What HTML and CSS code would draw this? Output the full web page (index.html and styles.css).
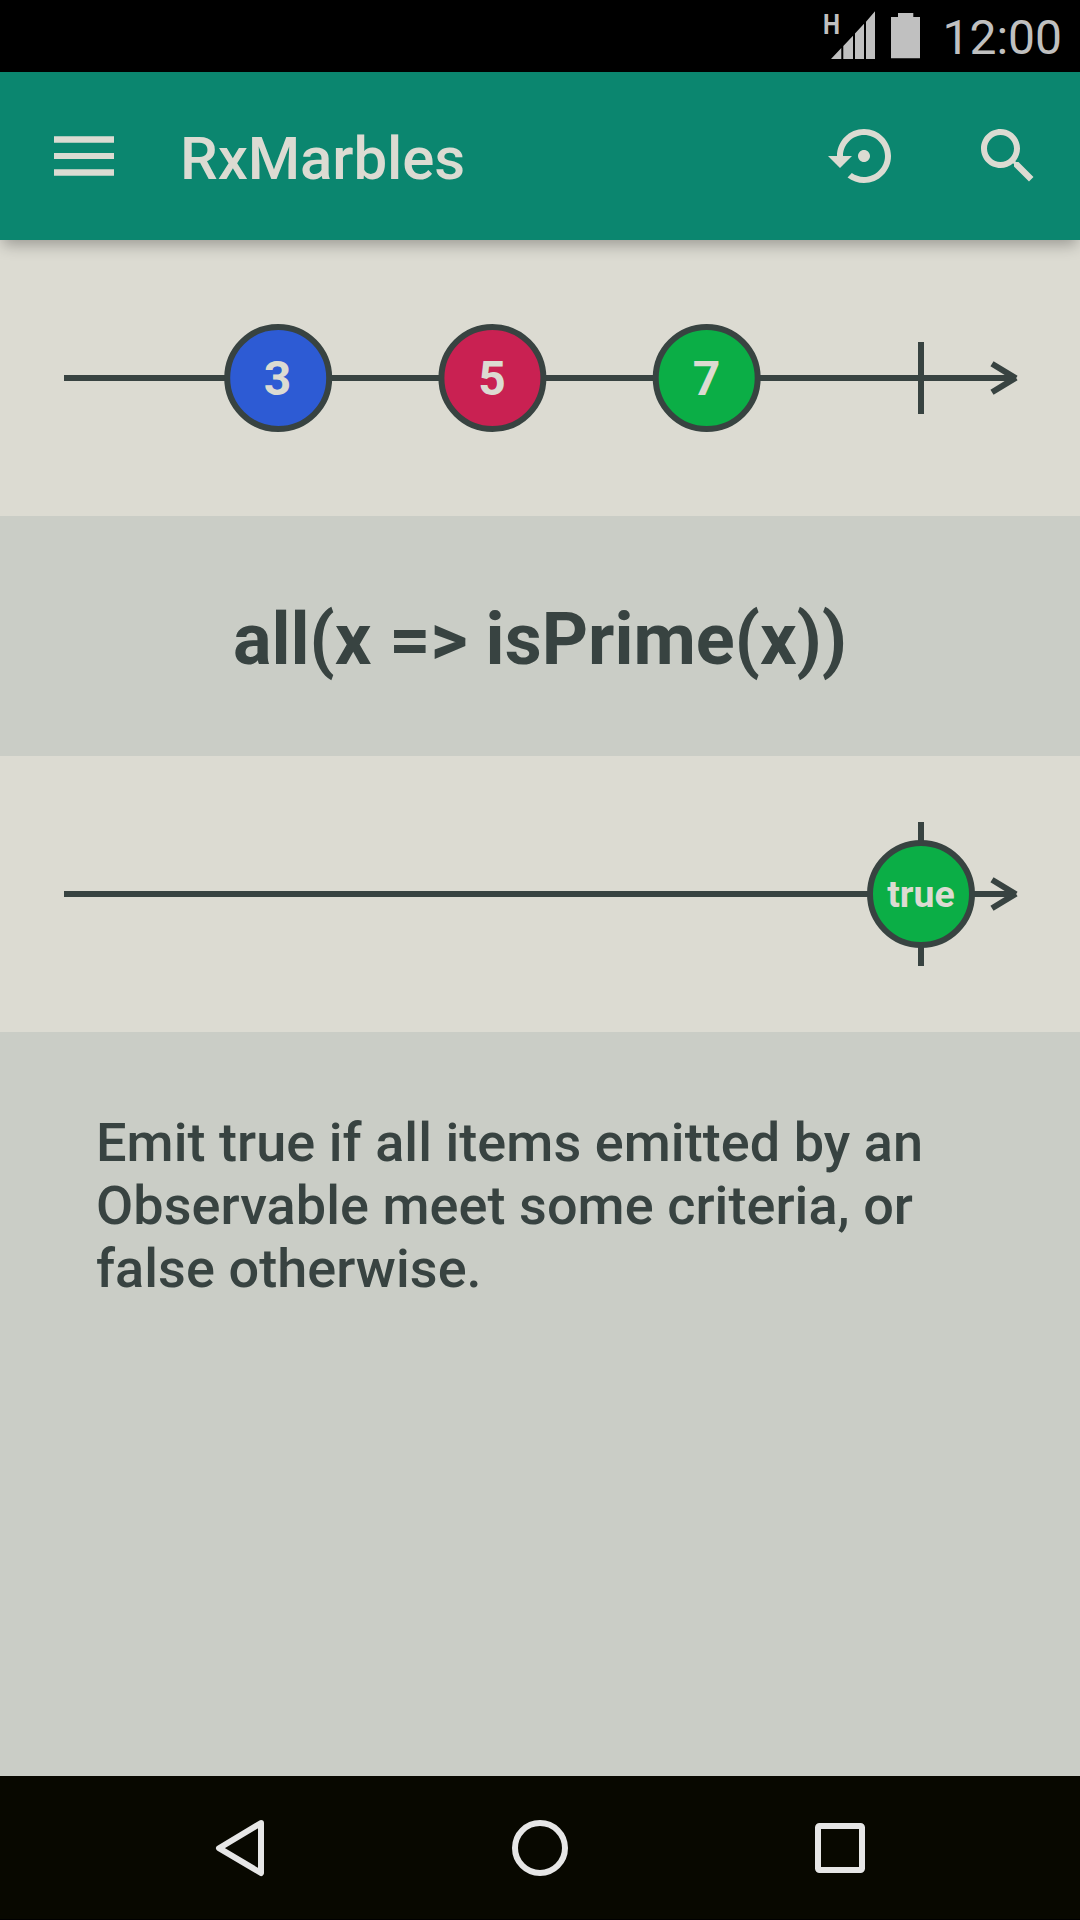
FILE: index.html
```html
<!DOCTYPE html>
<html lang="en">
<head>
<meta charset="utf-8">
<title>RxMarbles</title>
<link rel="stylesheet" href="styles.css">
</head>
<body>
<div class="screen">
  <div class="status-bar">
    <svg class="status-icons" width="100" height="72" viewBox="0 0 100 72" aria-hidden="true">
      <text class="network" x="3" y="33.7" textLength="17" lengthAdjust="spacingAndGlyphs">H</text>
      <path d="M11 59 21.3 48V59ZM23.3 59V46L33 35.7V59ZM35 59V33.5L44 23.8V59ZM46 59V21.7L55 11.2V59Z"/>
      <path d="M78 13H93.3V17H100V58.2H71V17H78Z"/>
    </svg>
    <span class="clock">12:00</span>
  </div>
  <header class="toolbar">
    <svg width="60" height="72" viewBox="0 0 60 72" aria-label="Menu">
      <path d="M0 16.2H60V22.7H0ZM0 33H60V39H0ZM0 49.2H60V55.7H0Z"/>
    </svg>
    <h1 class="title">RxMarbles</h1>
    <div class="actions">
      <svg width="72" height="72" viewBox="0 0 24 24" aria-label="Restore">
        <path d="M14 12c0-1.1-.9-2-2-2s-2 .9-2 2 .9 2 2 2 2-.9 2-2zm-2-9c-4.97 0-9 4.03-9 9H0l4 4 4-4H5c0-3.87 3.13-7 7-7s7 3.13 7 7-3.13 7-7 7c-1.51 0-2.91-.49-4.06-1.3l-1.42 1.44C8.04 20.3 9.94 21 12 21c4.97 0 9-4.03 9-9s-4.03-9-9-9z"/>
      </svg>
      <svg width="72" height="72" viewBox="0 0 24 24" aria-label="Search">
        <path d="M15.5 14h-.79l-.28-.27C15.41 12.59 16 11.11 16 9.5 16 5.91 13.09 3 9.5 3S3 5.91 3 9.5 5.91 16 9.5 16c1.61 0 3.09-.59 4.23-1.57l.27.28v.79l5 4.99L20.49 19l-4.99-5zm-6 0C7.01 14 5 11.99 5 9.5S7.01 5 9.5 5 14 7.01 14 9.5 11.99 14 9.5 14z"/>
      </svg>
    </div>
  </header>
  <main class="content">
    <svg class="timeline" width="1080" height="276" viewBox="0 0 1080 276">
      <path class="axis" d="M64 138H1016M992 123.8 1016 138.4M992 152.2 1016 137.6M921 102V174"/>
      <circle class="marble blue" cx="278.2" cy="138" r="51"/>
      <circle class="marble red" cx="492.4" cy="138" r="51"/>
      <circle class="marble green" cx="706.7" cy="138" r="51"/>
      <text class="value" x="277.5" y="155">3</text>
      <text class="value" x="492" y="155">5</text>
      <text class="value" x="706.5" y="155">7</text>
    </svg>
    <h2 class="operator">all(x =&gt; isPrime(x))</h2>
    <svg class="timeline" width="1080" height="276" viewBox="0 0 1080 276">
      <path class="axis" d="M64 138H1016M992 123.8 1016 138.4M992 152.2 1016 137.6M921 66V210"/>
      <circle class="marble green" cx="921" cy="138" r="51"/>
      <text class="value small" x="921" y="151.3">true</text>
    </svg>
    <p class="description">Emit true if all items emitted by an Observable meet some criteria, or false otherwise.</p>
  </main>
  <nav class="nav-bar">
    <svg width="60" height="60" viewBox="0 0 60 60" aria-label="Back">
      <path d="M51 5 9 30.2 51 55Z"/>
    </svg>
    <svg width="60" height="60" viewBox="0 0 60 60" aria-label="Home">
      <circle cx="30" cy="30" r="25"/>
    </svg>
    <svg width="60" height="60" viewBox="0 0 60 60" aria-label="Overview">
      <rect x="8" y="8" width="44" height="44" rx="1.5"/>
    </svg>
  </nav>
</div>
</body>
</html>
```
FILE: styles.css
```css
* {
  box-sizing: border-box;
}

body {
  margin: 0;
  font-family: Roboto, "Liberation Sans", sans-serif;
}

svg {
  display: block;
  flex: none;
}

h1,
h2,
p {
  margin: 0;
}

.screen {
  display: flex;
  flex-direction: column;
  width: 1080px;
  height: 1920px;
  overflow: hidden;
  background: #cacdc6;
}

.status-bar {
  display: flex;
  flex: none;
  justify-content: flex-end;
  align-items: center;
  gap: 22px;
  height: 72px;
  padding-right: 18px;
  background: #000;
  color: #c0c0c0;
}

.status-icons {
  fill: #c0c0c0;
}

.network {
  font-size: 28px;
  font-weight: 700;
}

.clock {
  padding-top: 3px;
  font-size: 48px;
  line-height: 56px;
}

.toolbar {
  display: flex;
  flex: none;
  align-items: center;
  position: relative;
  height: 168px;
  padding: 0 36px 0 54px;
  background: #0b866f;
  color: #dcdbd2;
  fill: #dcdbd2;
  box-shadow: 0 8px 14px -3px rgba(0, 0, 0, 0.29);
}

.title {
  margin-left: 66px;
  padding-top: 5px;
  font-size: 60px;
  font-weight: 500;
  line-height: 70px;
  letter-spacing: -0.1px;
}

.actions {
  display: flex;
  gap: 72px;
  margin-left: auto;
}

.content {
  flex: 1;
}

.timeline {
  background: #dcdbd2;
}

.axis {
  fill: none;
  stroke: #384341;
  stroke-width: 6;
}

.marble {
  stroke: #384341;
  stroke-width: 6;
}

.blue {
  fill: #2d5bd4;
}

.red {
  fill: #c92152;
}

.green {
  fill: #0bae46;
}

.value {
  fill: #dcdbd2;
  font-size: 48px;
  font-weight: 700;
  text-anchor: middle;
}

.value.small {
  font-size: 37.5px;
}

.operator {
  height: 240px;
  padding-top: 4px;
  color: #384341;
  font-size: 72px;
  font-weight: 700;
  line-height: 240px;
  text-align: center;
}

.description {
  padding: 79px 96px 0;
  color: #384341;
  font-size: 54px;
  font-weight: 500;
  line-height: 63px;
  letter-spacing: 0.06px;
}

.nav-bar {
  display: flex;
  flex: none;
  justify-content: center;
  align-items: center;
  gap: 240px;
  height: 144px;
  border-bottom: 1px solid #000;
  background: #080800;
  fill: none;
  stroke: #e6e6e6;
  stroke-width: 6;
  stroke-linejoin: round;
}
```
